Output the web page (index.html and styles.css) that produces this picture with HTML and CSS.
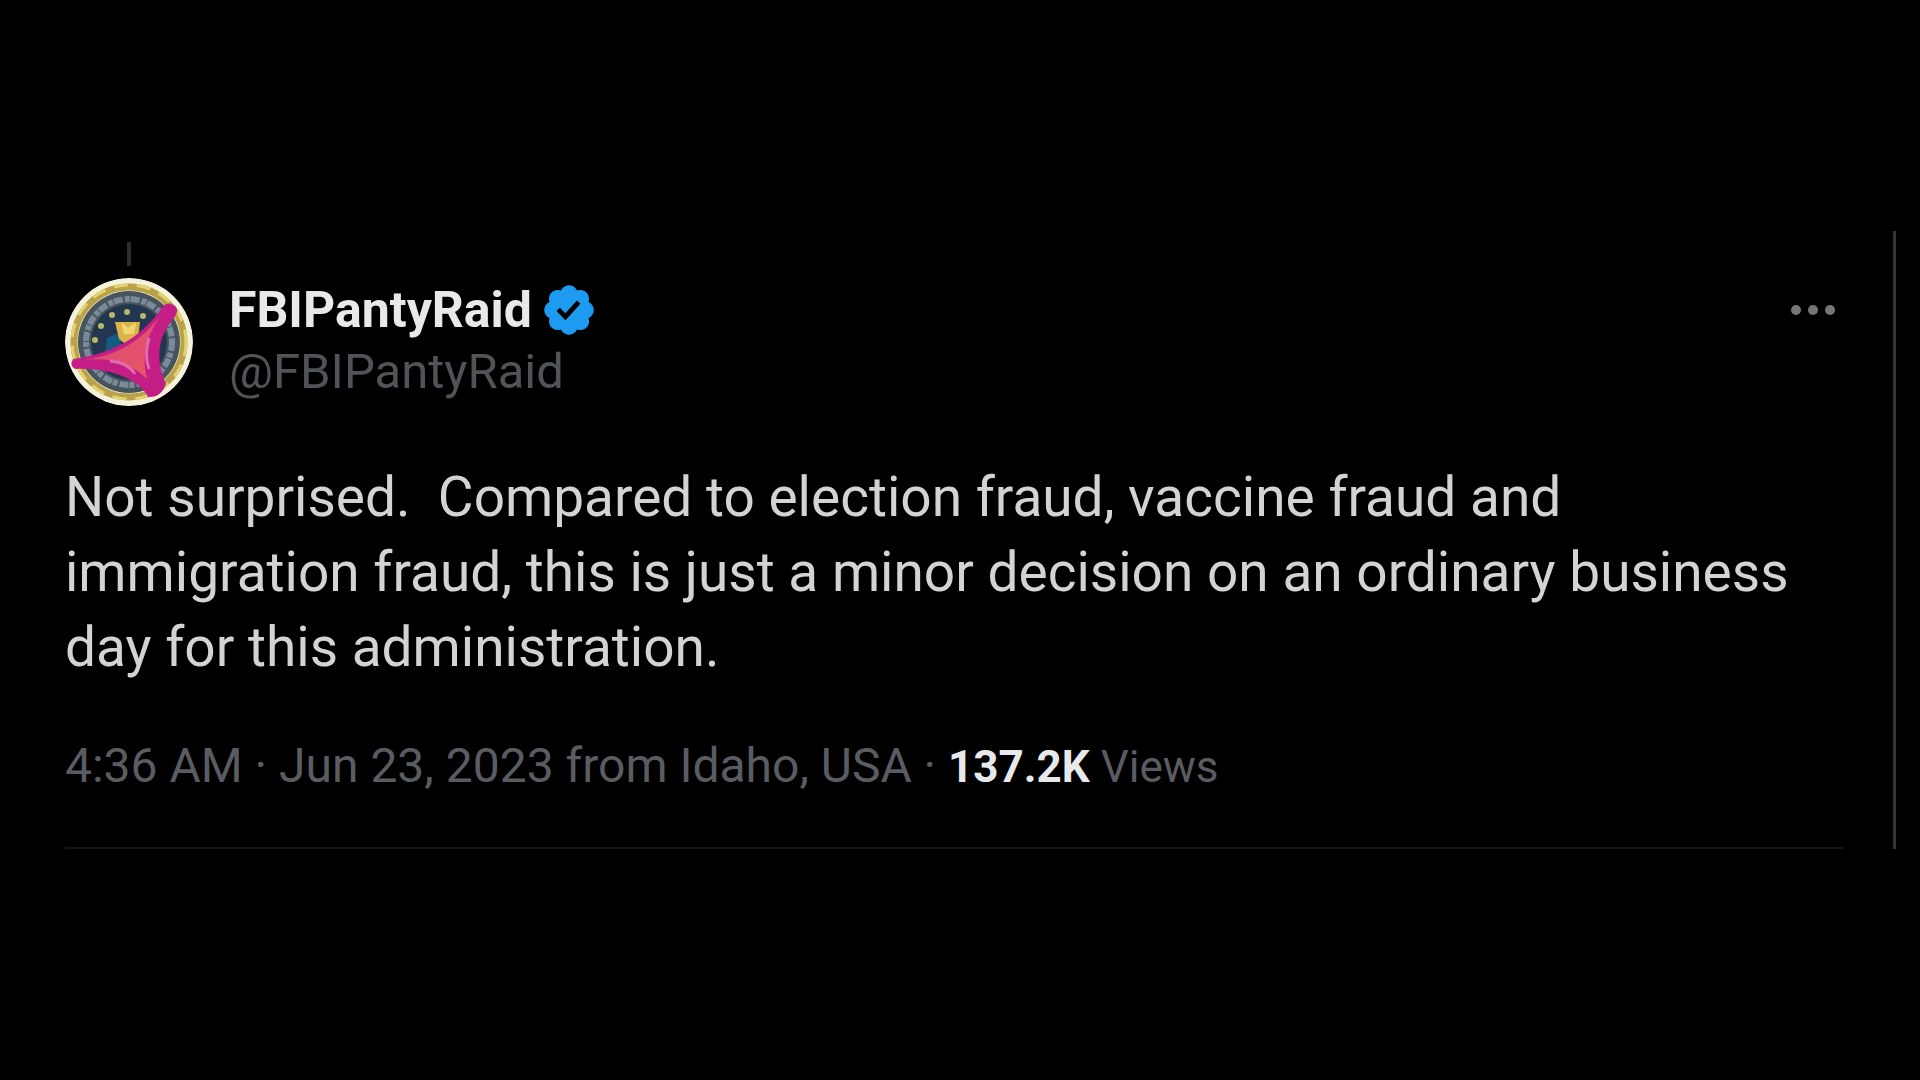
FILE: index.html
```html
<!DOCTYPE html>
<html lang="en">
<head>
<meta charset="utf-8">
<meta name="viewport" content="width=device-width, initial-scale=1">
<title>FBIPantyRaid</title>
<link rel="stylesheet" href="styles.css">
</head>
<body>
<main class="column">
  <article class="post">
    <div class="thread-line"></div>
    <header class="author">
      <svg class="avatar" viewBox="0 0 128 128" role="img" aria-label="Avatar">
        <defs>
          <linearGradient id="cloth" x1="0" y1="0" x2="1" y2="1">
            <stop offset="0" stop-color="#d8447c"/>
            <stop offset="1" stop-color="#ea5a62"/>
          </linearGradient>
          <clipPath id="disc"><circle cx="64" cy="64" r="64"/></clipPath>
        </defs>
        <g clip-path="url(#disc)">
          <circle cx="64" cy="64" r="64" fill="#f4f1dc"/>
          <circle cx="64" cy="64" r="55" fill="none" stroke="#b9a24a" stroke-width="7"/>
          <circle cx="64" cy="64" r="57" fill="none" stroke="#e3d470" stroke-width="3" stroke-dasharray="14 9"/>
          <circle cx="64" cy="64" r="51" fill="#47545c"/>
          <circle cx="64" cy="64" r="43" fill="none" stroke="#7b899d" stroke-width="6" stroke-dasharray="9 2 5 1"/>
          <circle cx="64" cy="64" r="38" fill="#23364f"/>
          <path d="M42 60l14-6v16l-16 6z" fill="#165b83"/>
          <path d="M50 44h25l-2 17-10 7-9-7z" fill="#d9b548"/>
          <path d="M56 44l7 6 8-6-2 12h-10z" fill="#efd672"/>
          <g fill="#b8b66b"><circle cx="30" cy="62" r="3"/><circle cx="36" cy="48" r="3"/><circle cx="47" cy="37" r="3"/><circle cx="62" cy="34" r="3"/><circle cx="78" cy="38" r="3"/></g>
          <path d="M8 81C42 77 76 62 98 28q5-5 12 0 5 4-1 12C94 57 91 76 98 99l3 7q-5 14-18 13C76 102 44 89 10 91q-6-4-2-10z" fill="#c51d86"/>
          <path d="M20 82C51 77 76 65 98 34 82 56 76 76 82 101 68 87 47 79 20 82z" fill="url(#cloth)"/>
          <path d="M45 83q17 1 25 13M84 60q-5 17 0 31" fill="none" stroke="#e06cae" stroke-width="3"/>
        </g>
      </svg>
      <div class="identity">
        <div class="name-row">
          <a class="name" href="#">FBIPantyRaid</a>
          <svg class="badge" viewBox="0 0 22 22" role="img" aria-label="Verified account"><path fill="#1d9bf0" d="M20.396 11c-.018-.646-.215-1.275-.57-1.816-.354-.54-.852-.972-1.438-1.246.223-.607.27-1.264.14-1.897-.131-.634-.437-1.218-.882-1.687-.47-.445-1.053-.75-1.687-.882-.633-.13-1.29-.083-1.897.14-.273-.587-.704-1.086-1.245-1.44S11.647 1.62 11 1.604c-.646.017-1.273.213-1.813.568s-.969.854-1.24 1.44c-.608-.223-1.267-.272-1.902-.14-.635.13-1.22.436-1.69.882-.445.47-.749 1.055-.878 1.688-.13.633-.08 1.29.144 1.896-.587.274-1.087.705-1.443 1.245-.356.54-.555 1.17-.574 1.817.02.647.218 1.276.574 1.817.356.54.856.972 1.443 1.245-.224.606-.274 1.263-.144 1.896.13.634.433 1.218.877 1.688.47.443 1.054.747 1.687.878.633.132 1.29.084 1.897-.136.274.586.705 1.084 1.246 1.439.54.354 1.17.551 1.816.569.647-.016 1.276-.213 1.817-.567s.972-.854 1.245-1.44c.604.239 1.266.296 1.903.164.636-.132 1.22-.447 1.68-.907.46-.46.776-1.044.908-1.681s.075-1.299-.165-1.903c.586-.274 1.084-.705 1.439-1.246.354-.54.551-1.17.569-1.816zM9.662 14.85l-3.429-3.428 1.293-1.302 2.072 2.072 4.4-4.794 1.347 1.246z"/></svg>
        </div>
        <a class="handle" href="#">@FBIPantyRaid</a>
      </div>
      <button class="more" type="button" aria-label="More">
        <svg viewBox="0 0 46 12"><circle cx="6" cy="6" r="5"/><circle cx="23" cy="6" r="5"/><circle cx="40" cy="6" r="5"/></svg>
      </button>
    </header>
    <p class="text">Not surprised.&nbsp; Compared to election fraud, vaccine fraud and<br>immigration fraud, this is just a minor decision on an ordinary business<br>day for this administration.</p>
    <p class="meta"><time datetime="2023-06-23T04:36">4:36 AM · Jun 23, 2023</time> from Idaho, USA · <span class="views"><strong>137.2K</strong> Views</span></p>
  </article>
</main>
</body>
</html>
```
FILE: styles.css
```css
* { box-sizing: border-box; }

body {
  margin: 0;
  min-height: 100vh;
  display: flex;
  align-items: center;
  background: #000;
  color: #d2d3d4;
  font-family: Roboto, "Liberation Sans", sans-serif;
}

.column {
  flex: 1;
  margin-right: 24px;
  padding: 0 50px 0 65px;
  border-right: 3px solid #333536;
}

.post {
  padding-top: 11px;
  border-bottom: 2px solid #141516;
}

.thread-line {
  width: 4px;
  height: 24px;
  margin: 0 0 12px 62px;
  background: #2b2e30;
}

.author {
  display: flex;
  align-items: flex-start;
}

.avatar {
  flex: none;
  width: 128px;
  height: 128px;
}

.identity {
  flex: 1;
  padding: 1px 0 0 36px;
}

.name-row {
  display: flex;
  align-items: center;
  gap: 8px;
}

.name,
.handle {
  line-height: 62px;
  text-decoration: none;
}

.name {
  color: #e7e9ea;
  font-size: 50px;
  font-weight: 700;
}

.handle {
  color: #505357;
  font-size: 49px;
}

.badge {
  width: 58px;
  height: 58px;
}

.more {
  padding: 26px 7px;
  border: 0;
  background: none;
}

.more svg {
  display: block;
  width: 46px;
  height: 12px;
  fill: #747779;
}

.text {
  margin: 54px 0 49px;
  font-size: 55px;
  font-weight: 450;
  line-height: 75px;
}

.meta {
  margin: 0;
  padding-bottom: 48px;
  color: #595c60;
  font-size: 48px;
  line-height: 64px;
}

.views {
  font-size: 44px;
}

.views strong {
  color: #e7e9ea;
}
```
